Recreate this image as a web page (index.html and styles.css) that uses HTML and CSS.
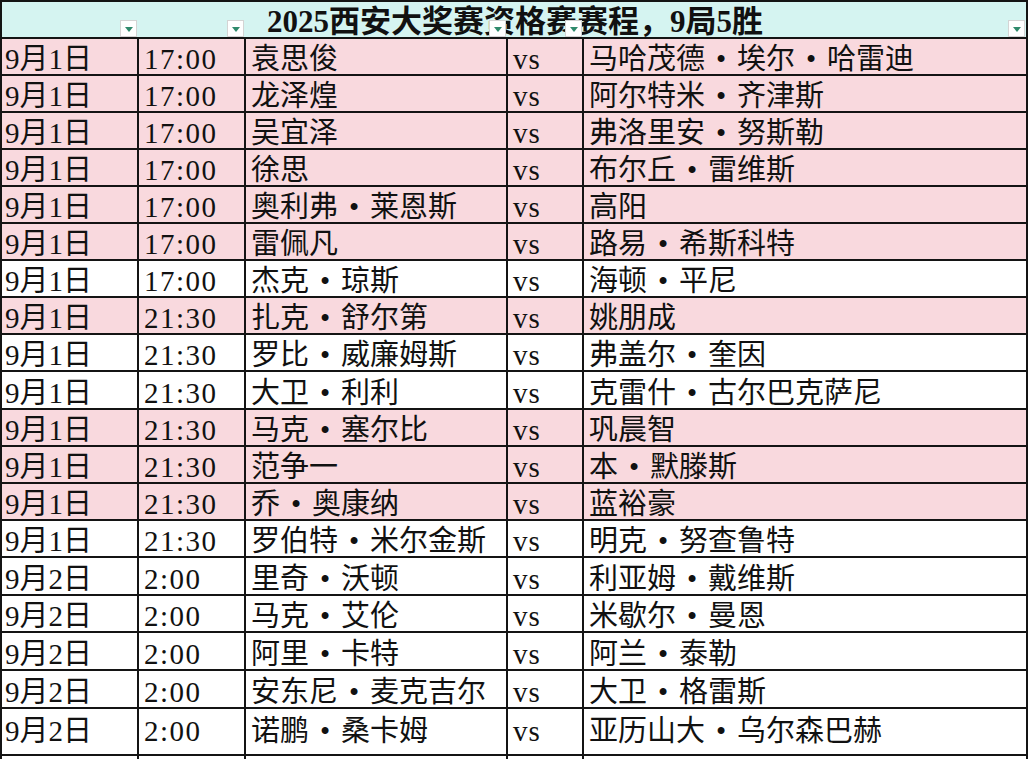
FILE: index.html
```html
<!DOCTYPE html>
<html lang="zh-CN">
<head>
<meta charset="utf-8">
<title>2025西安大奖赛资格赛赛程</title>
<link rel="stylesheet" href="styles.css">
</head>
<body>
<div class="sheet">
  <div class="hdr">
    <div class="title">2025西安大奖赛资格赛赛程，9局5胜</div>
    <div class="fb fb1"><i></i></div>
    <div class="fb fb2"><i></i></div>
    <div class="fb fb3"><i></i></div>
    <div class="fb fb4"><i></i></div>
    <div class="fb fb5"><i></i></div>
  </div>

  <div class="row pink"><div class="c c1">9月1日</div><div class="c t">17:00</div><div class="c">袁思俊</div><div class="c v">vs</div><div class="c">马哈茂德<span class="d">•</span>埃尔<span class="d">•</span>哈雷迪</div></div>
  <div class="row pink"><div class="c c1">9月1日</div><div class="c t">17:00</div><div class="c">龙泽煌</div><div class="c v">vs</div><div class="c">阿尔特米<span class="d">•</span>齐津斯</div></div>
  <div class="row pink"><div class="c c1">9月1日</div><div class="c t">17:00</div><div class="c">吴宜泽</div><div class="c v">vs</div><div class="c">弗洛里安<span class="d">•</span>努斯勒</div></div>
  <div class="row pink"><div class="c c1">9月1日</div><div class="c t">17:00</div><div class="c">徐思</div><div class="c v">vs</div><div class="c">布尔丘<span class="d">•</span>雷维斯</div></div>
  <div class="row pink"><div class="c c1">9月1日</div><div class="c t">17:00</div><div class="c">奥利弗<span class="d">•</span>莱恩斯</div><div class="c v">vs</div><div class="c">高阳</div></div>
  <div class="row pink"><div class="c c1">9月1日</div><div class="c t">17:00</div><div class="c">雷佩凡</div><div class="c v">vs</div><div class="c">路易<span class="d">•</span>希斯科特</div></div>
  <div class="row"><div class="c c1">9月1日</div><div class="c t">17:00</div><div class="c">杰克<span class="d">•</span>琼斯</div><div class="c v">vs</div><div class="c">海顿<span class="d">•</span>平尼</div></div>
  <div class="row pink"><div class="c c1">9月1日</div><div class="c t">21:30</div><div class="c">扎克<span class="d">•</span>舒尔第</div><div class="c v">vs</div><div class="c">姚朋成</div></div>
  <div class="row"><div class="c c1">9月1日</div><div class="c t">21:30</div><div class="c">罗比<span class="d">•</span>威廉姆斯</div><div class="c v">vs</div><div class="c">弗盖尔<span class="d">•</span>奎因</div></div>
  <div class="row h38"><div class="c c1">9月1日</div><div class="c t">21:30</div><div class="c">大卫<span class="d">•</span>利利</div><div class="c v">vs</div><div class="c">克雷什<span class="d">•</span>古尔巴克萨尼</div></div>
  <div class="row pink"><div class="c c1">9月1日</div><div class="c t">21:30</div><div class="c">马克<span class="d">•</span>塞尔比</div><div class="c v">vs</div><div class="c">巩晨智</div></div>
  <div class="row pink"><div class="c c1">9月1日</div><div class="c t">21:30</div><div class="c">范争一</div><div class="c v">vs</div><div class="c">本<span class="d">•</span>默滕斯</div></div>
  <div class="row pink"><div class="c c1">9月1日</div><div class="c t">21:30</div><div class="c">乔<span class="d">•</span>奥康纳</div><div class="c v">vs</div><div class="c">蓝裕豪</div></div>
  <div class="row"><div class="c c1">9月1日</div><div class="c t">21:30</div><div class="c">罗伯特<span class="d">•</span>米尔金斯</div><div class="c v">vs</div><div class="c">明克<span class="d">•</span>努查鲁特</div></div>
  <div class="row h38"><div class="c c1">9月2日</div><div class="c t">2:00</div><div class="c">里奇<span class="d">•</span>沃顿</div><div class="c v">vs</div><div class="c">利亚姆<span class="d">•</span>戴维斯</div></div>
  <div class="row"><div class="c c1">9月2日</div><div class="c t">2:00</div><div class="c">马克<span class="d">•</span>艾伦</div><div class="c v">vs</div><div class="c">米歇尔<span class="d">•</span>曼恩</div></div>
  <div class="row h38"><div class="c c1">9月2日</div><div class="c t">2:00</div><div class="c">阿里<span class="d">•</span>卡特</div><div class="c v">vs</div><div class="c">阿兰<span class="d">•</span>泰勒</div></div>
  <div class="row h38"><div class="c c1">9月2日</div><div class="c t">2:00</div><div class="c">安东尼<span class="d">•</span>麦克吉尔</div><div class="c v">vs</div><div class="c">大卫<span class="d">•</span>格雷斯</div></div>
  <div class="row h47"><div class="c c1">9月2日</div><div class="c t">2:00</div><div class="c">诺鹏<span class="d">•</span>桑卡姆</div><div class="c v">vs</div><div class="c">亚历山大<span class="d">•</span>乌尔森巴赫</div></div>
  <div class="row"><div class="c c1"></div><div class="c t"></div><div class="c"></div><div class="c v"></div><div class="c"></div></div>
</div>
</body>
</html>
```

FILE: styles.css
```css
html, body {
  margin: 0;
  padding: 0;
  background: #ffffff;
}

.sheet {
  width: 1028px;
  box-sizing: border-box;
  border-left: 2px solid #141414;
  border-top: 2px solid #141414;
  font-family: "Liberation Serif", "Noto Sans CJK SC", serif;
  font-size: 29px;
  color: #111111;
}

.hdr,
.row {
  display: grid;
  grid-template-columns: 137px 107px 262px 76px 1fr;
}

.hdr {
  height: 37px;
  box-sizing: border-box;
  border-bottom: 2px solid #141414;
  border-right: 2px solid #141414;
  background: #d5f4f1;
}

.title {
  grid-column: 1 / -1;
  grid-row: 1;
  justify-self: center;
  align-self: end;
  font-size: 31px;
  line-height: 31px;
  font-weight: bold;
  white-space: nowrap;
  padding-left: 2px;
}

.fb {
  grid-row: 1;
  justify-self: end;
  align-self: end;
  width: 17px;
  height: 17px;
  box-sizing: border-box;
  margin-right: 2px;
  background: #ffffff;
  border: 1px solid #d4d4d4;
  display: flex;
  align-items: center;
  justify-content: center;
  z-index: 1;
}

.fb i {
  display: block;
  width: 0;
  height: 0;
  margin-top: 2px;
  border-left: 4px solid transparent;
  border-right: 4px solid transparent;
  border-top: 5px solid #2f8a6c;
}

.fb1 { grid-column: 1; }
.fb2 { grid-column: 2; }
.fb3 { grid-column: 3; }
.fb4 { grid-column: 4; }
.fb5 { grid-column: 5; margin-right: 1px; }

.row {
  height: 37px;
  background: #ffffff;
}

.row.pink {
  background: #f9d9de;
}

.row.h38 { height: 38px; }
.row.h47 { height: 47px; }

.c {
  box-sizing: border-box;
  border-right: 2px solid #141414;
  border-bottom: 2px solid #141414;
  display: flex;
  align-items: flex-end;
  padding-left: 5px;
  line-height: 29px;
  white-space: nowrap;
  overflow: hidden;
}

.c1 {
  padding-left: 3px;
}

.t {
  letter-spacing: 1.5px;
}

.v {
  letter-spacing: 1px;
}

.h47 .c {
  padding-bottom: 8px;
}

.d {
  display: inline-block;
  width: 32px;
  text-align: center;
}
```
